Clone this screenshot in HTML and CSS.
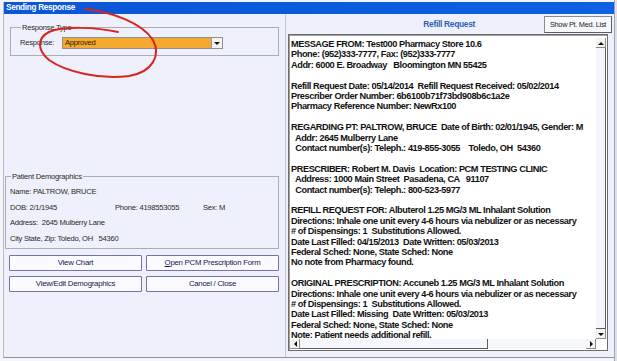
FILE: index.html
```html
<!DOCTYPE html>
<html lang="en">
<head>
  <meta charset="UTF-8">
  <title>Sending Response</title>
  <link rel="stylesheet" href="styles.css">
</head>
<body>
  <div class="desk">
    <div class="window">
      <div class="titlebar">Sending Response</div>
      <div class="content">

        <div class="left">
          <fieldset class="group group-type">
            <legend>Response Type</legend>
            <div class="resp-row">
              <span class="resp-label">Response:</span>
              <div class="combo">
                <span class="combo-value">Approved</span>
                <span class="combo-btn"><span class="tri-down"></span></span>
              </div>
            </div>
          </fieldset>

          <fieldset class="group group-demo">
            <legend>Patient Demographics</legend>
            <div class="demo-row">Name: PALTROW, BRUCE</div>
            <div class="demo-row demo-cols">
              <span>DOB: 2/1/1945</span>
              <span>Phone: 4198553055</span>
              <span>Sex: M</span>
            </div>
            <div class="demo-row">Address:  2645 Mulberry Lane</div>
            <div class="demo-row">City State, Zip: Toledo, OH   54360</div>
          </fieldset>

          <div class="buttons">
            <button class="btn">View Chart</button>
            <button class="btn"><u>O</u>pen PCM Prescription Form</button>
            <button class="btn">View/Edit Demographics</button>
            <button class="btn">Cancel / Close</button>
          </div>
        </div>

        <div class="right">
          <div class="right-head">
            <span class="head-title">Refill Request</span>
            <button class="med-btn">Show Pt. Med. List</button>
          </div>
          <div class="textbox">
            <div class="text-main">
              <div class="text-lines">
<p>MESSAGE FROM: Test000 Pharmacy Store 10.6
Phone: (952)333-7777, Fax: (952)333-7777
Addr: 6000 E. Broadway   Bloomington MN 55425</p>
<p>Refill Request Date: 05/14/2014  Refill Request Received: 05/02/2014
Prescriber Order Number: 6b6100b71f73bd908b6c1a2e
Pharmacy Reference Number: NewRx100</p>
<p>REGARDING PT: PALTROW, BRUCE  Date of Birth: 02/01/1945, Gender: M
  Addr: 2645 Mulberry Lane
  Contact number(s): Teleph.: 419-855-3055    Toledo, OH  54360</p>
<p>PRESCRIBER: Robert M. Davis  Location: PCM TESTING CLINIC
  Address: 1000 Main Street  Pasadena, CA   91107
  Contact number(s): Teleph.: 800-523-5977</p>
<p>REFILL REQUEST FOR: Albuterol 1.25 MG/3 ML Inhalant Solution
Directions: Inhale one unit every 4-6 hours via nebulizer or as necessary
# of Dispensings: 1  Substitutions Allowed.
Date Last Filled: 04/15/2013  Date Written: 05/03/2013
Federal Sched: None, State Sched: None
No note from Pharmacy found.</p>
<p>ORIGINAL PRESCRIPTION: Accuneb 1.25 MG/3 ML Inhalant Solution
Directions: Inhale one unit every 4-6 hours via nebulizer or as necessary
# of Dispensings: 1  Substitutions Allowed.
Date Last Filled: Missing  Date Written: 05/03/2013
Federal Sched: None, State Sched: None
Note: Patient needs additional refill.</p>
              </div>
              <div class="vscroll">
                <span class="sb-arrow"><span class="tri-up"></span></span>
                <span class="sb-thumb-v"></span>
                <span class="sb-arrow"><span class="tri-down"></span></span>
              </div>
            </div>
            <div class="hscroll">
              <span class="sb-arrow"><span class="tri-left"></span></span>
              <span class="sb-thumb-h"></span>
              <span class="sb-track"></span>
              <span class="sb-arrow"><span class="tri-right"></span></span>
              <span class="sb-corner"></span>
            </div>
          </div>
        </div>

      </div>

      <svg class="scribble" width="617" height="361" viewBox="0 0 617 361">
        <path d="M84 9 C110 12 140 22 152 40 C160 55 152 72 128 76 C100 80 65 72 48 60 C36 50 36 38 48 32 C62 26 95 27 117 32"
              fill="none" stroke="#d9241e" stroke-width="2" stroke-linecap="round"/>
      </svg>
    </div>
    <div class="edge"></div>
  </div>
</body>
</html>
```

FILE: styles.css
```css
body {
  margin: 0;
  background-color: #f4f5f8;
  font-family: 'Liberation Sans', Arial, sans-serif;
  color: #222;
}

.desk {
  display: flex;
  width: 617px;
  height: 361px;
  overflow: hidden;
}

.window {
  position: relative;
  margin: 2px 0 3px 3px;
  width: 610px;
  display: flex;
  flex-direction: column;
  background-color: #eef1fb;
  border-left: 1px solid #b8bcc8;
  border-bottom: 1px solid #8e929c;
}

.edge {
  flex: 1;
  background-color: #dde1ea;
  border-left: 1px solid #9ea4b0;
}

.titlebar {
  height: 12px;
  line-height: 12px;
  padding-left: 2px;
  background: linear-gradient(to right, #0a56d6, #0e60e4);
  color: #fff;
  font-size: 8.2px;
  font-weight: bold;
  letter-spacing: -0.3px;
}

.content {
  flex: 1;
  display: flex;
  min-height: 0;
}

/* left side */
.left {
  width: 281px;
  border-right: 1px solid #c4c8d2;
  font-size: 7.6px;
  letter-spacing: -0.25px;
  color: #2a2a2a;
}

.group {
  margin: 0;
  border: 1px solid #a9adb8;
  padding: 0 4px;
}

.group legend {
  padding: 0 1px;
  margin-left: 1px;
  line-height: 9px;
}

.group-type {
  margin: 9px 6px 0 6px;
  padding: 4px 0 6px 9px;
}

.resp-row {
  display: flex;
  align-items: center;
  height: 13px;
}

.resp-label {
  width: 42px;
}

.combo {
  width: 161px;
  height: 12px;
  display: flex;
  border: 1px solid #8f8f8f;
  box-sizing: border-box;
  background-color: #f5a82e;
}

.combo-value {
  flex: 1;
  line-height: 10px;
  padding-left: 2px;
  color: #2a2211;
}

.combo-btn {
  width: 10px;
  background-color: #f3f3f3;
  border-left: 1px solid #9a9a9a;
  display: flex;
  align-items: center;
  justify-content: center;
}

.group-demo {
  margin: 116px 6px 0 1px;
  padding: 3px 4px 1px 4px;
}

.demo-row {
  height: 15.7px;
  line-height: 15.7px;
  white-space: pre;
}

.demo-cols {
  display: grid;
  grid-template-columns: 105px 88px auto;
}

.buttons {
  display: grid;
  grid-template-columns: 133px 133px;
  grid-auto-rows: 16px;
  gap: 5px 4px;
  margin: 6px 0 0 5px;
}

.btn {
  margin: 0;
  padding: 0;
  font-family: inherit;
  font-size: 7.8px;
  letter-spacing: -0.25px;
  color: #161650;
  background-color: #fbfbff;
  border: 1px solid #7474aa;
  border-radius: 1px;
}

/* right side */
.right {
  flex: 1;
  display: flex;
  flex-direction: column;
  padding: 0 6px 6px 2px;
  min-width: 0;
}

.right-head {
  height: 20px;
  display: flex;
  align-items: center;
  justify-content: flex-end;
}

.head-title {
  margin-right: 69px;
  color: #2f5fb4;
  font-size: 8.4px;
  font-weight: bold;
  letter-spacing: -0.3px;
}

.med-btn {
  margin: 1px -4px 0 0;
  width: 68px;
  height: 17px;
  padding: 0;
  font-family: inherit;
  font-size: 7.4px;
  letter-spacing: -0.3px;
  color: #222;
  background-color: #f7f8fc;
  border: 1px solid #8a8c94;
  border-right-color: #5c5e66;
  border-bottom-color: #5c5e66;
}

.textbox {
  flex: 1;
  display: flex;
  flex-direction: column;
  min-height: 0;
  background-color: #fff;
  border: 1px solid #6c6c6c;
  box-shadow: inset 1px 1px 0 #a0a0a0;
}

.text-main {
  flex: 1;
  display: flex;
  min-height: 0;
}

.text-lines {
  flex: 1;
  overflow: hidden;
  padding: 4px 0 0 2px;
  font-size: 9.2px;
  font-weight: bold;
  letter-spacing: -0.42px;
  line-height: 10.4px;
  color: #111;
}

.text-lines p {
  margin: 0 0 10.4px 0;
  white-space: pre;
}

.vscroll {
  width: 10px;
  display: flex;
  flex-direction: column;
  margin: 3px 1px 0 0;
}

.sb-arrow {
  width: 10px;
  height: 10px;
  flex: none;
  display: flex;
  align-items: center;
  justify-content: center;
  background-color: #f4f4f4;
  box-shadow: inset -1px -1px 0 #8a8a8a;
}

.sb-thumb-v {
  flex: 1;
  background-color: #f4f6fb;
  border-right: 1px solid #5c5c64;
  border-bottom: 1px solid #5c5c64;
}

.hscroll {
  height: 10px;
  display: flex;
  margin: 0 0 1px 1px;
}

.sb-thumb-h {
  width: 188px;
  background-color: #f4f6fb;
  border-right: 1px solid #5c5c64;
  border-bottom: 1px solid #5c5c64;
  box-sizing: border-box;
}

.sb-track {
  flex: 1;
  background-color: #f7f8fb;
}

.sb-corner {
  width: 11px;
  background-color: #fff;
}

.tri-down, .tri-up, .tri-left, .tri-right {
  width: 0;
  height: 0;
  border: 3px solid transparent;
}

.tri-down {
  border-top: 3px solid #111;
  border-bottom: 0;
  margin-top: 1px;
}

.tri-up {
  border-bottom: 3px solid #111;
  border-top: 0;
}

.tri-left {
  border-right: 3px solid #111;
  border-left: 0;
}

.tri-right {
  border-left: 3px solid #111;
  border-right: 0;
}

.scribble {
  position: absolute;
  left: -3px;
  top: -2px;
  pointer-events: none;
}
```
